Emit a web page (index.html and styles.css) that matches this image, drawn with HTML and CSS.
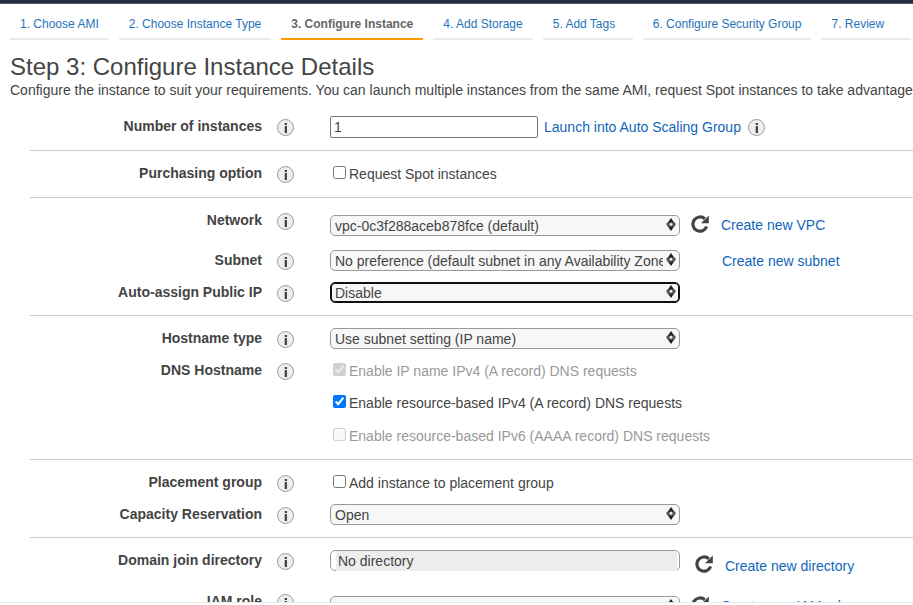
FILE: index.html
```html
<!DOCTYPE html>
<html lang="en">
<head>
<meta charset="utf-8">
<title>Configure Instance Details</title>
<link rel="stylesheet" href="styles.css">
</head>
<body>
<svg class="defs" aria-hidden="true">
  <symbol id="info" viewBox="0 0 17 17">
    <circle cx="8.500" cy="8.500" r="8" fill="#eee" stroke="#999"/>
    <path fill="#444" d="M7.700 4h2.300v2H7.700zM7.700 7h2.300v7H7.700z"/>
    <path fill="#ccc" d="M7 7h.700v1H7zM7 13h.700v1H7z"/>
  </symbol>
  <symbol id="refresh" viewBox="0 0 18 18">
    <path fill="none" stroke="#444" stroke-width="3.200" d="M15.700 11.500A7.100 7.100 0 1 1 13.800 3.800"/>
    <path fill="#444" d="M17.800.500v7.700H10z"/>
  </symbol>
  <symbol id="arrows" viewBox="0 0 10 13">
    <path fill="#222" d="M5 0 8.500 5h-7zM5 13 1.500 8h7z"/>
    <path fill="#555" d="M0 6 1.500 4.500h7L10 6 8 9H2z"/>
    <path fill="#f7f7f7" d="M5 4.500 6.800 6.300 5 8 3.200 6.300z"/>
  </symbol>
</svg>
<header class="topbar"></header>
<nav class="steps">
  <a class="step" href="#">1. Choose AMI</a>
  <a class="step" href="#">2. Choose Instance Type</a>
  <a class="step step-active" href="#" aria-current="step">3. Configure Instance</a>
  <a class="step" href="#">4. Add Storage</a>
  <a class="step" href="#">5. Add Tags</a>
  <a class="step" href="#">6. Configure Security Group</a>
  <a class="step" href="#">7. Review</a>
</nav>
<main class="content">
  <h1>Step 3: Configure Instance Details</h1>
  <p class="intro">Configure the instance to suit your requirements. You can launch multiple instances from the same AMI, request Spot instances to take advantage</p>
  <form class="form">
    <section class="group">
      <div class="row row-tall">
        <label class="name" for="count">Number of instances</label>
        <svg class="info"><use href="#info"/></svg>
        <div class="field">
          <input class="number" id="count" type="text" value="1">
          <a class="after-number" href="#">Launch into Auto Scaling Group</a>
          <svg class="info-inline"><use href="#info"/></svg>
        </div>
      </div>
    </section>
    <section class="group">
      <div class="row row-tall">
        <span class="name">Purchasing option</span>
        <svg class="info"><use href="#info"/></svg>
        <div class="field"><label class="check"><input type="checkbox">Request Spot instances</label></div>
      </div>
    </section>
    <section class="group">
      <div class="row row-lookup">
        <label class="name" for="network">Network</label>
        <svg class="info"><use href="#info"/></svg>
        <div class="field">
          <div class="select"><select id="network"><option>vpc-0c3f288aceb878fce (default)</option></select><svg><use href="#arrows"/></svg></div>
          <button class="refresh" type="button" aria-label="Refresh"><svg><use href="#refresh"/></svg></button>
          <a class="create" href="#">Create new VPC</a>
        </div>
      </div>
      <div class="row">
        <label class="name" for="subnet">Subnet</label>
        <svg class="info"><use href="#info"/></svg>
        <div class="field">
          <div class="select"><select id="subnet"><option>No preference (default subnet in any Availability Zone)</option></select><svg><use href="#arrows"/></svg></div>
          <a class="create-alone" href="#">Create new subnet</a>
        </div>
      </div>
      <div class="row">
        <label class="name" for="publicip">Auto-assign Public IP</label>
        <svg class="info"><use href="#info"/></svg>
        <div class="field">
          <div class="select select-focus"><select id="publicip"><option>Disable</option></select><svg><use href="#arrows"/></svg></div>
        </div>
      </div>
    </section>
    <section class="group">
      <div class="row">
        <label class="name" for="hostname">Hostname type</label>
        <svg class="info"><use href="#info"/></svg>
        <div class="field">
          <div class="select"><select id="hostname"><option>Use subnet setting (IP name)</option></select><svg><use href="#arrows"/></svg></div>
        </div>
      </div>
      <div class="row">
        <span class="name">DNS Hostname</span>
        <svg class="info"><use href="#info"/></svg>
        <div class="field"><label class="check check-off"><input type="checkbox" checked disabled>Enable IP name IPv4 (A record) DNS requests</label></div>
      </div>
      <div class="row row-tall">
        <div class="field"><label class="check"><input type="checkbox" checked>Enable resource-based IPv4 (A record) DNS requests</label></div>
      </div>
      <div class="row row-tall">
        <div class="field"><label class="check check-off"><input type="checkbox" disabled>Enable resource-based IPv6 (AAAA record) DNS requests</label></div>
      </div>
    </section>
    <section class="group">
      <div class="row">
        <span class="name">Placement group</span>
        <svg class="info"><use href="#info"/></svg>
        <div class="field"><label class="check"><input type="checkbox">Add instance to placement group</label></div>
      </div>
      <div class="row">
        <label class="name" for="capacity">Capacity Reservation</label>
        <svg class="info"><use href="#info"/></svg>
        <div class="field">
          <div class="select"><select id="capacity"><option>Open</option></select><svg><use href="#arrows"/></svg></div>
        </div>
      </div>
    </section>
    <section class="group">
      <div class="row row-directory">
        <label class="name" for="directory">Domain join directory</label>
        <svg class="info"><use href="#info"/></svg>
        <div class="field">
          <div class="combo"><input id="directory" type="text" value="No directory"></div>
          <div class="lowered">
            <button class="refresh" type="button" aria-label="Refresh"><svg><use href="#refresh"/></svg></button>
            <a class="create" href="#">Create new directory</a>
          </div>
        </div>
      </div>
      <div class="row row-lookup">
        <label class="name" for="role">IAM role</label>
        <svg class="info"><use href="#info"/></svg>
        <div class="field">
          <div class="select"><select id="role"><option>None</option></select><svg><use href="#arrows"/></svg></div>
          <button class="refresh" type="button" aria-label="Refresh"><svg><use href="#refresh"/></svg></button>
          <a class="create" href="#">Create new IAM role</a>
        </div>
      </div>
    </section>
  </form>
</main>
<footer class="footer"></footer>
</body>
</html>
```
FILE: styles.css
```css
* { box-sizing: border-box; }

body {
  display: flex;
  flex-direction: column;
  height: 100vh;
  margin: 0;
  overflow: hidden;
  background: #fff;
  color: #444;
  font: 14px/20px "Liberation Sans", Arial, sans-serif;
}

a { color: #1166bb; text-decoration: none; }
input, select, button { margin: 0; color: inherit; font: inherit; }
svg { display: block; flex: none; }
.defs { position: absolute; width: 0; height: 0; }

.topbar { flex: none; height: 4px; background: #232f3e; border-bottom: 1px solid #4c5663; }

.steps { display: flex; flex: none; gap: 10px; padding: 4px 10px 0; }
.step {
  flex: none;
  min-width: 90px;
  padding: 6px 10px 4px;
  border-bottom: 2px solid #eaeaea;
  color: #1f74ba;
  font-size: 12px;
  line-height: 20px;
  white-space: nowrap;
}
.step-active { border-color: #f90; color: #666; font-weight: bold; }

.content { flex: 1; min-height: 0; padding: 13px 0 0 10px; overflow: hidden; }
h1 { margin: 0; font-size: 24px; font-weight: normal; line-height: 27px; white-space: nowrap; }
.intro { margin: 0; white-space: nowrap; }
.form { padding: 4px 0 0 20px; }

.group { padding: 6px 0 7px; border-bottom: 1px solid #ccc; }
.group:last-child { border-bottom: 0; }
.row {
  display: grid;
  grid-template-columns: 232px 17px 1fr;
  column-gap: 15px;
  align-items: start;
  min-height: 32px;
}
.row-tall { min-height: 33px; }
.row-lookup { min-height: 40px; }
.row-directory { min-height: 41px; }
.name { font-weight: bold; line-height: 32px; text-align: right; }
.info { width: 17px; height: 17px; margin-top: 9px; }
.field {
  display: flex;
  grid-column: 3;
  align-items: center;
  height: 33px;
  margin-bottom: -1px;
  padding-left: 21px;
  white-space: nowrap;
}
.row-lookup .field { margin-top: 5px; }
.row-lookup .create { margin-bottom: 2px; }

.number { width: 208px; height: 22px; padding: 0 3px; border: 1px solid #767676; border-radius: 2px; background: #fff; }
.after-number { margin: 0 7px 0 6px; }
.info-inline { width: 17px; height: 17px; margin-top: 2px; }

.check { display: flex; gap: 3px; align-items: center; padding-left: 3px; line-height: 20px; }
.check input { width: 13px; height: 13px; margin-bottom: 2px; }
.check-off { color: #999; }

.select { position: relative; flex: none; width: 350px; height: 21px; }
.select select {
  display: block;
  width: 100%;
  height: 100%;
  padding: 0 16px 1px 4px;
  overflow: hidden;
  appearance: none;
  border: 1px solid #999;
  border-radius: 5px;
  background: #f7f7f7;
}
.select-focus select { border-color: #101010; box-shadow: inset 0 0 0 1px #101010; }
.select svg { position: absolute; top: 3px; right: 4px; width: 10px; height: 13px; pointer-events: none; }

.combo { flex: none; width: 350px; height: 21px; padding: 0 2px 0 5px; border: 1px solid #999; border-radius: 5px; }
.combo input { display: block; width: 100%; height: 20px; padding: 0 2px; border: 0; background: #ededed; }
.lowered { display: flex; align-items: center; margin: 10px 0 0 4px; }

.refresh { flex: none; margin: 0 12px 0 11px; padding: 0 0 3px; border: 0; background: none; }
.refresh svg { width: 18px; height: 18px; }
.create-alone { margin-left: 42px; }

.footer { flex: none; height: 3px; border-top: 1px solid #eaeaea; }
```
